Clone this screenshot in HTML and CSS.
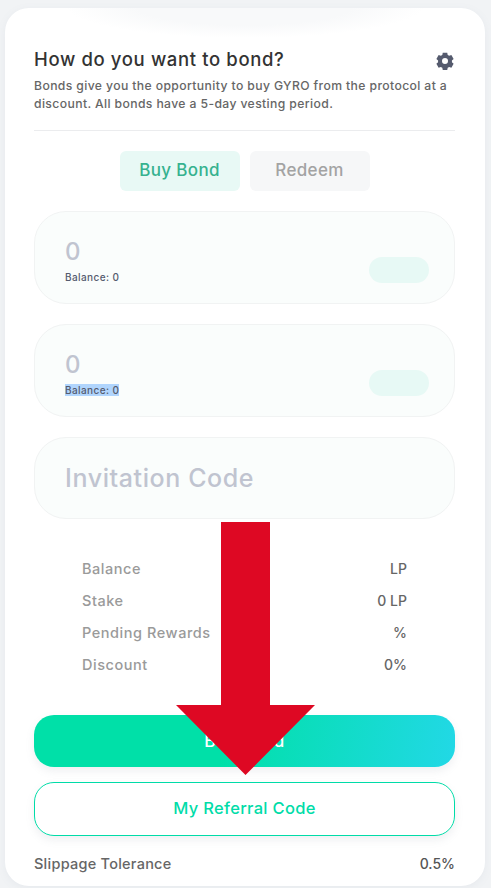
FILE: index.html
```html
<!DOCTYPE html>
<html lang="en">
<head>
<meta charset="utf-8">
<title>Bond</title>
<link rel="stylesheet" href="styles.css">
</head>
<body>
<main class="card">
  <div class="glow"></div>
  <header class="head">
    <div class="title-row">
      <h1>How do you want to bond?</h1>
      <svg class="gear" viewBox="0 0 24 24" aria-hidden="true"><path fill-rule="evenodd" d="M9 1h6l.6 3 2 1.1 2.9-1 3 5.2-2.3 2c.1.8.1 1.6 0 2.4l2.3 2-3 5.2-2.9-1-2 1.1-.6 3H9l-.6-3-2-1.1-2.9 1-3-5.2 2.3-2a9 9 0 0 1 0-2.4l-2.3-2 3-5.2 2.9 1 2-1.1zM12 8a4 4 0 1 0 0 8 4 4 0 0 0 0-8z"/></svg>
    </div>
    <p>Bonds give you the opportunity to buy GYRO from the protocol at a discount. All bonds have a 5-day vesting period.</p>
  </header>
  <nav class="tabs">
    <button class="tab tab-on">Buy Bond</button>
    <button class="tab tab-off">Redeem</button>
  </nav>
  <section class="field">
    <div class="field-main">
      <div class="amount">0</div>
      <div class="balance"><span>Balance: 0</span></div>
    </div>
    <div class="pill"></div>
  </section>
  <section class="field">
    <div class="field-main">
      <div class="amount">0</div>
      <div class="balance"><span class="selected">Balance: 0</span></div>
    </div>
    <div class="pill"></div>
  </section>
  <section class="field field-code">Invitation Code</section>
  <dl class="stats">
    <div class="stat"><dt>Balance</dt><dd>LP</dd></div>
    <div class="stat"><dt>Stake</dt><dd>0 LP</dd></div>
    <div class="stat"><dt>Pending Rewards</dt><dd>%</dd></div>
    <div class="stat"><dt>Discount</dt><dd>0%</dd></div>
  </dl>
  <button class="cta">Buy Bond</button>
  <button class="outline">My Referral Code</button>
  <div class="slippage"><span>Slippage Tolerance</span><b>0.5%</b></div>
</main>
<svg class="arrow" viewBox="0 0 139 253" aria-hidden="true"><path d="M45 0h49v183h45L69.5 253 0 183h45z"/></svg>
</body>
</html>
```
FILE: styles.css
```css
* { box-sizing: border-box; }
html, body { margin: 0; height: 888px; overflow: hidden; }
body {
  background: #f1f3f5;
  font-family: Inter, "Noto Sans", sans-serif;
  padding: 8px 6px 2px 5px;
  position: relative;
}
.card {
  position: relative;
  height: 878px;
  background: #fff;
  border-radius: 24px;
  padding: 38px 30px 0 29px;
  box-shadow: 0 2px 8px rgba(120, 130, 150, .08);
  overflow: hidden;
}
.glow {
  position: absolute;
  left: 60px; right: 60px; top: -34px;
  height: 64px;
  border-radius: 50%;
  background: radial-gradient(closest-side, #f8f9fa 60%, #fff 100%);
}
.head { position: relative; border-bottom: 1px solid #ebecee; height: 85px; }
.title-row { display: flex; justify-content: space-between; align-items: center; height: 26px; }
h1 { margin: 0; font-size: 18.5px; line-height: 26px; font-weight: 500; color: #333; letter-spacing: .63px; }
.gear { width: 18px; height: 18px; fill: #555b6e; margin-top: 3px; margin-right: 1px; }
.head p { margin: 5px 0 0; font-size: 12.2px; line-height: 18px; font-weight: 500; color: #666; letter-spacing: .38px; }
.tabs { display: flex; justify-content: center; gap: 10px; margin: 20px 0; }
.tab {
  width: 120px; height: 40px; border: 0; border-radius: 6px;
  font: 500 17px Inter, "Noto Sans", sans-serif; letter-spacing: .35px; padding: 0 0 2px;
}
.tab-on { background: #e8f9f5; color: #36b28f; }
.tab-off { background: #f6f7f8; color: #a3a3a3; }
.field {
  display: flex; justify-content: space-between; align-items: flex-end;
  height: 93px; margin-bottom: 20px; padding: 0 25px 19px 30px;
  background: #fafdfc; border: 1px solid #f1f3f3; border-radius: 32px;
}
.amount { font-size: 24px; line-height: 28px; font-weight: 500; color: #c0c4d0; letter-spacing: .5px; }
.balance { font-size: 10px; line-height: 13px; font-weight: 500; color: #555b6e; margin-top: 5px; letter-spacing: .42px; }
.selected { background: #b0d5fd; }
.pill { width: 60px; height: 26px; margin-bottom: 1px; border-radius: 13px; background: #e7f9f5; }
.field-code {
  display: flex; align-items: center; height: 82px; margin-bottom: 0; padding: 0 30px;
  font-size: 25px; font-weight: 500; color: #c0c4d0; letter-spacing: .6px;
}
.stats { margin: 33px 48px 0; height: 163px; }
.stat { display: flex; justify-content: space-between; height: 32px; align-items: center; font-size: 14.5px; font-weight: 500; }
.stat dt { color: #9a9a9a; letter-spacing: .55px; }
.stat dd { margin: 0; color: #666; font-size: 14px; }
.cta, .outline { display: block; width: 100%; font: 500 16.5px Inter, "Noto Sans", sans-serif; letter-spacing: .3px; padding: 0 0 1px; }
.cta {
  height: 52px; border: 0; border-radius: 20px; color: #fff;
  font-size: 17px;
  background: linear-gradient(100deg, #00e0a8 45%, #22d8e6 100%);
  box-shadow: 0 4px 8px rgba(120, 130, 150, .12);
}
.outline {
  height: 54px; margin-top: 15px; background: #fff; color: #00dca8;
  border: 1px solid #00dca8; border-radius: 20px;
  box-shadow: 0 4px 8px rgba(120, 130, 150, .12);
  padding-bottom: 2px;
}
.slippage { display: flex; justify-content: space-between; align-items: center; height: 20px; margin-top: 17px; font-size: 14.5px; font-weight: 500; color: #666; letter-spacing: .25px; }
.slippage b { font-weight: 500; font-size: 14px; color: #555; letter-spacing: 0; }
.arrow { position: absolute; left: 176px; top: 522px; width: 139px; height: 253px; fill: #de0823; }
```
